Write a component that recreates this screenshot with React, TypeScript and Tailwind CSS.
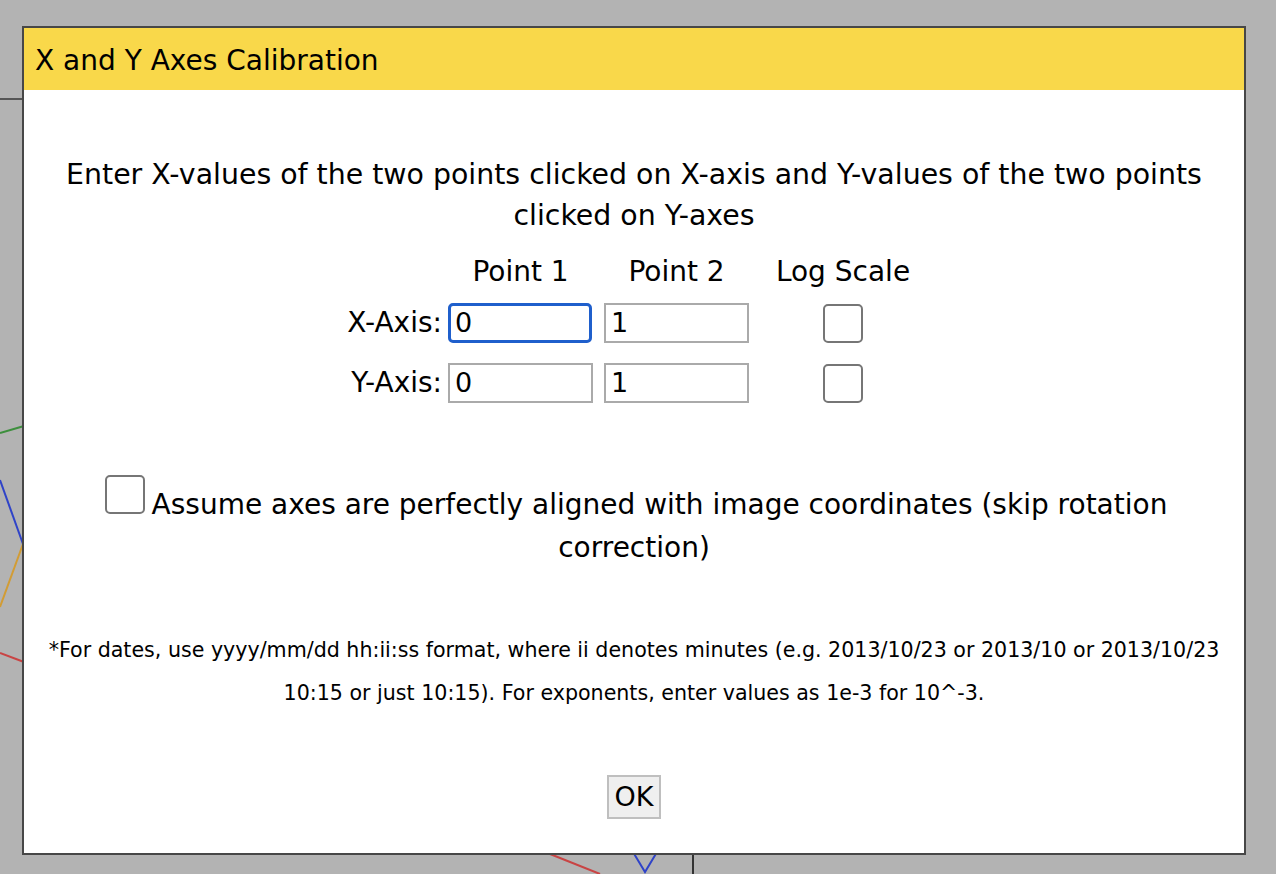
import React from "react";

const font = { fontFamily: '"DejaVu Sans", Verdana, sans-serif' };

function ChartBackdrop() {
  return (
    <svg
      className="absolute inset-0"
      width="1276"
      height="874"
      viewBox="0 0 1276 874"
      fill="none"
    >
      <line x1="0" y1="99" x2="24" y2="99" stroke="#555" strokeWidth="2" />
      <polyline points="0,433 24,426" stroke="#3d8f3d" strokeWidth="2" />
      <polyline points="0,480 23,544" stroke="#2f43c8" strokeWidth="2" />
      <polyline points="23,544 0,607" stroke="#d29c34" strokeWidth="2" />
      <polyline points="0,653 24,662" stroke="#c94444" strokeWidth="2" />
      <polyline points="540,850 600,874" stroke="#c94444" strokeWidth="2" />
      <polyline points="633,852 645,872 657,852" stroke="#2f43c8" strokeWidth="2" />
      <line x1="693" y1="852" x2="693" y2="874" stroke="#333" strokeWidth="2" />
    </svg>
  );
}

function Checkbox() {
  return (
    <input
      type="checkbox"
      className="appearance-none w-[40px] h-[39px] rounded-[5px] border-2 border-[#767676] bg-white block"
    />
  );
}

function AxisRow({ label, p1, p2, focused }: { label: string; p1: string; p2: string; focused?: boolean }) {
  return (
    <div className="flex items-center h-[40px]">
      <div className="w-[122px] text-right pr-[6px] text-[28px] leading-none">{label}</div>
      <div className="w-[156px]">
        <input
          defaultValue={p1}
          className={
            focused
              ? "w-[144px] h-[40px] border-[3px] border-[#1f5fcc] rounded-[5px] pl-[4px] text-[27px] outline-none text-black"
              : "w-[145px] h-[40px] border-2 border-[#aaaaaa] pl-[5px] text-[27px] outline-none text-black"
          }
          style={font}
        />
      </div>
      <div className="w-[156px]">
        <input
          defaultValue={p2}
          className="w-[145px] h-[40px] border-2 border-[#aaaaaa] pl-[5px] text-[27px] outline-none text-black"
          style={font}
        />
      </div>
      <div className="w-[166px] flex justify-center">
        <Checkbox />
      </div>
    </div>
  );
}

export default function App() {
  return (
    <div className="relative w-[1276px] h-[874px] bg-[#b3b3b3] overflow-hidden" style={font}>
      <ChartBackdrop />
      <div className="absolute left-[22px] top-[26px] w-[1224px] h-[829px] border-2 border-[#474747] bg-white flex flex-col text-black">
        <div className="h-[62px] bg-[#f9d84a] flex items-center pl-[11px] pt-[3px] text-[28px]">
          X and Y Axes Calibration
        </div>

        <div className="flex flex-col items-center">
          <p className="mt-[64px] text-[28.4px] leading-[41px] text-center whitespace-nowrap">
            Enter X-values of the two points clicked on X-axis and Y-values of the two points
            <br />
            clicked on Y-axes
          </p>

          <div className="mt-[15px] w-[616px] pr-[16px]">
            <div className="flex h-[41px] items-center text-[28px]">
              <div className="w-[122px]" />
              <div className="w-[156px] pr-[11px] text-center">Point 1</div>
              <div className="w-[156px] pr-[11px] text-center">Point 2</div>
              <div className="w-[166px] text-center">Log Scale</div>
            </div>
            <div className="mt-[11px]">
              <AxisRow label="X-Axis:" p1="0" p2="1" focused />
            </div>
            <div className="mt-[20px]">
              <AxisRow label="Y-Axis:" p1="0" p2="1" />
            </div>
          </div>

          <div className="mt-[72px] flex items-baseline text-[28px] whitespace-nowrap translate-x-[2px]">
            <Checkbox />
            <span className="ml-[7px] leading-[43px]">
              Assume axes are perfectly aligned with image coordinates (skip rotation
            </span>
          </div>
          <div className="text-[28px] leading-[43px]">correction)</div>

          <p className="mt-[60px] text-[20.6px] leading-[43px] text-center whitespace-nowrap">
            *For dates, use yyyy/mm/dd hh:ii:ss format, where ii denotes minutes (e.g. 2013/10/23 or 2013/10 or 2013/10/23
            <br />
            10:15 or just 10:15). For exponents, enter values as 1e-3 for 10^-3.
          </p>

          <button
            className="mt-[60px] w-[54px] h-[44px] bg-[#efefef] border-2 border-[#bfbfbf] text-[27px] flex items-center justify-center"
            style={font}
          >
            OK
          </button>
        </div>
      </div>
    </div>
  );
}
